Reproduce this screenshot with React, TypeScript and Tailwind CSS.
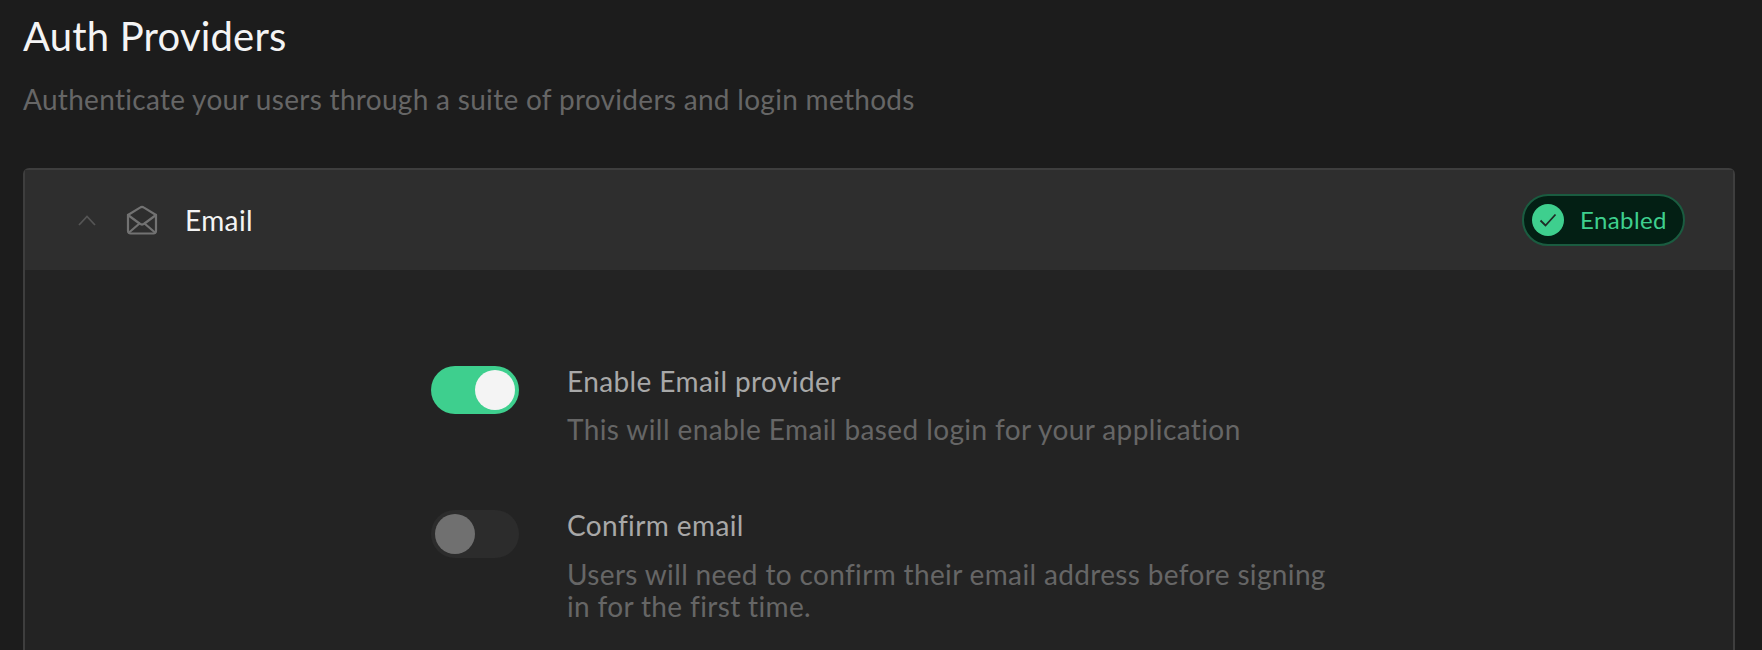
import React from "react";

function Toggle({ on }: { on: boolean }) {
  return (
    <div className={`flex h-12 w-[88px] shrink-0 items-center rounded-full p-1 ${on ? "justify-end bg-[#3ecf8e]" : "justify-start bg-[#2c2c2c]"}`}>
      <div className={`h-10 w-10 rounded-full ${on ? "bg-[#f4f4f4]" : "bg-[#707070]"}`} />
    </div>
  );
}

export default function App() {
  return (
    <div className="h-[650px] overflow-hidden bg-[#1c1c1c] pl-[23px] pr-[27px] font-['Lato',sans-serif]">
      <h1 className="pt-[11px] text-[40px] leading-[50px] font-normal tracking-[0.2px] text-[#f4f4f4]">Auth Providers</h1>
      <p className="mt-[20px] text-[28px] leading-[36px] tracking-[0.3px] text-[#666666]">Authenticate your users through a suite of providers and login methods</p>
      <div className="mt-[51px] h-[600px] rounded-t-[6px] border-2 border-[#3e3e3e] bg-[#232323]">
        <div className="flex h-[100px] items-center justify-between bg-[#2e2e2e] pl-[53px] pr-[48px]">
          <div className="flex items-center">
            <svg width="18" height="11" viewBox="0 0 18 11" fill="none" stroke="#555555" strokeWidth="1.8"><path d="M1 10l8-8.5L17 10" /></svg>
            <svg className="ml-[30px]" width="32" height="30" viewBox="0 0 32 30" fill="none" stroke="#727272" strokeWidth="2.2" strokeLinejoin="round" strokeLinecap="round">
              <path d="M2 10 14 2.6a3.5 3.5 0 0 1 4 0L30 10v16a2.5 2.5 0 0 1-2.5 2.5h-23A2.5 2.5 0 0 1 2 26z" />
              <path d="M2 10l11.5 8.5a4 4 0 0 0 5 0L30 10" />
              <path d="M3 27.5l10.5-9M29 27.5l-10.5-9" />
            </svg>
            <span className="ml-[27px] text-[28px] leading-[34px] tracking-[0.4px] text-[#f4f4f4]">Email</span>
          </div>
          <div className="flex h-[52px] w-[163px] items-center rounded-full border-2 border-[#1a5c40] bg-[#031f14] pl-[8px]">
            <div className="flex h-8 w-8 items-center justify-center rounded-full bg-[#3ecf8e]">
              <svg width="18" height="14" viewBox="0 0 18 14" fill="none" stroke="#1f2a25" strokeWidth="1.8"><path d="M1.5 7.5 6.5 12.5 16.5 1.5" /></svg>
            </div>
            <span className="ml-[16px] text-[24px] leading-[30px] tracking-[0.4px] text-[#3ecf8e]">Enabled</span>
          </div>
        </div>
        <div className="pl-[406px] pt-[96px]">
          <div className="flex gap-[48px]">
            <Toggle on />
            <div className="-mt-[3px]">
              <div className="text-[28px] leading-[36px] tracking-[0.4px] text-[#a8a8a8]">Enable Email provider</div>
              <div className="mt-[12px] text-[28px] leading-[36px] tracking-[0.4px] text-[#666666]">This will enable Email based login for your application</div>
            </div>
          </div>
          <div className="mt-[63px] flex gap-[48px]">
            <Toggle on={false} />
            <div className="-mt-[3px] w-[800px]">
              <div className="text-[28px] leading-[36px] tracking-[0.4px] text-[#a8a8a8]">Confirm email</div>
              <div className="mt-[15px] text-[28px] leading-[32px] tracking-[0.35px] text-[#666666]">Users will need to confirm their email address before signing<br />in for the first time.</div>
            </div>
          </div>
        </div>
      </div>
    </div>
  );
}
